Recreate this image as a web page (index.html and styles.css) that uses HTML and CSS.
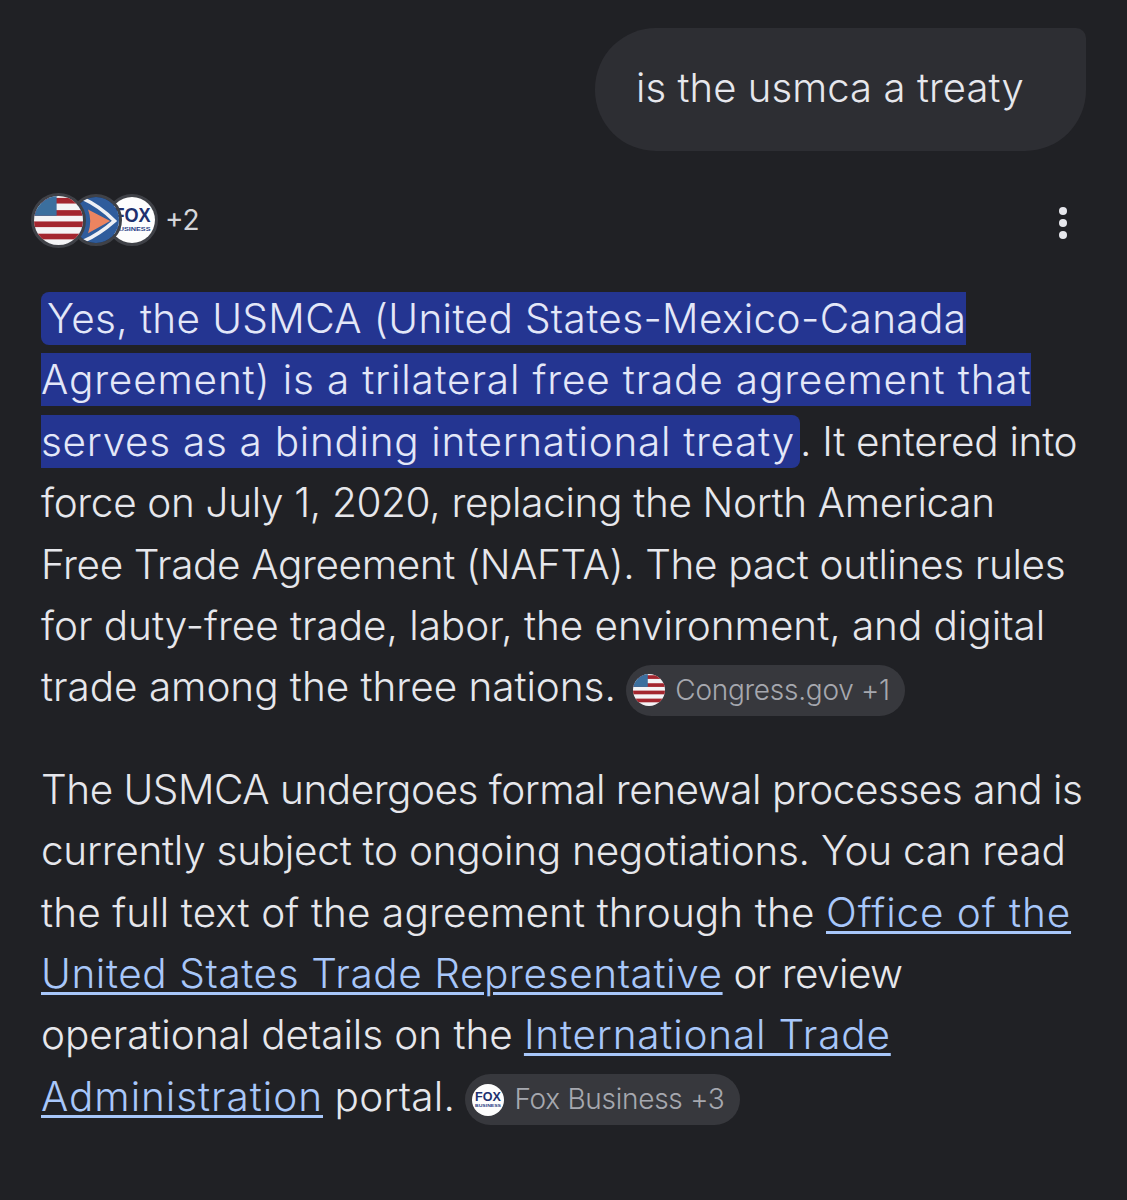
FILE: index.html
```html
<!DOCTYPE html>
<html lang="en">
<head>
    <meta charset="UTF-8">
    <meta name="viewport" content="width=device-width, initial-scale=1.0">
    <title>is the usmca a treaty</title>
    <link rel="stylesheet" href="styles.css">
</head>
<body>
    <svg class="defs" width="0" height="0">
        <symbol id="flag" viewBox="0 0 52 52">
            <rect width="52" height="52" fill="#f4f4f6"/>
            <rect y="2" width="52" height="6" fill="#a3262f"/>
            <rect y="15" width="52" height="6" fill="#a3262f"/>
            <rect y="27" width="52" height="6" fill="#a3262f"/>
            <rect y="40" width="52" height="6" fill="#a3262f"/>
            <rect width="24" height="21" fill="#3b6f9e"/>
        </symbol>
    </svg>

    <div class="page">
        <div class="question">is the usmca a treaty</div>

        <div class="sources">
            <svg class="avatar first" viewBox="0 0 52 52"><use href="#flag"/></svg>
            <svg class="avatar second" viewBox="0 0 52 52">
                <rect width="52" height="52" fill="#2f5c9c"/>
                <path d="M12 2 Q30 10 47 27 Q30 42 12 50" fill="none" stroke="#eef0f5" stroke-width="4"/>
                <path d="M17 14 L42 27 L17 41 Q22 27 17 14Z" fill="#ec8460"/>
            </svg>
            <svg class="avatar third" viewBox="0 0 52 52">
                <rect width="52" height="52" fill="#fdfdfd"/>
                <text x="26" y="28" text-anchor="middle" textLength="42" lengthAdjust="spacingAndGlyphs" class="fox-word">FOX</text>
                <text x="26" y="38" text-anchor="middle" textLength="42" lengthAdjust="spacingAndGlyphs" class="fox-sub">BUSINESS</text>
            </svg>
            <span class="more">+2</span>
            <div class="menu"><i></i><i></i><i></i></div>
        </div>

        <p class="answer">
            <span class="hl"><span class="ls-p37">Yes, the USMCA (United States-Mexico-Canada</span><br><span class="ls-p83">Agreement) is a trilateral free trade agreement that</span><br><span class="ls-p70">serves as a binding international treaty</span></span><span class="ls-n29">. It entered into</span><br>
            <span class="ls-n34">force on July 1, 2020, replacing the North American</span><br>
            <span class="ls-n36">Free Trade Agreement (NAFTA). The pact outlines rules</span><br>
            <span class="ls-n04">for duty-free trade, labor, the environment, and digital</span><br>
            <span class="ls-n04">trade among the three nations.</span>
            <span class="chip"><svg class="chip-icon" viewBox="0 0 52 52"><use href="#flag"/></svg>Congress.gov +1</span>
        </p>

        <p class="answer">
            <span class="ls-n48">The USMCA undergoes formal renewal processes and is</span><br>
            <span class="ls-n27">currently subject to ongoing negotiations. You can read</span><br>
            <span class="ls-p10">the full text of the agreement through the </span><a href="#" class="ls-p91">Office of the</a><br>
            <a href="#" class="ls-p60">United States Trade Representative</a><span class="ls-n57"> or review</span><br>
            <span class="ls-n07">operational details on the </span><a href="#" class="ls-p82">International Trade</a><br>
            <a href="#" class="ls-p95">Administration</a><span class="ls-p20"> portal.</span>
            <span class="chip"><svg class="chip-icon" viewBox="0 0 52 52">
                <rect width="52" height="52" fill="#fdfdfd"/>
                <text x="26" y="28" text-anchor="middle" textLength="42" lengthAdjust="spacingAndGlyphs" class="fox-word">FOX</text>
                <text x="26" y="38" text-anchor="middle" textLength="42" lengthAdjust="spacingAndGlyphs" class="fox-sub">BUSINESS</text>
            </svg>Fox Business +3</span>
        </p>
    </div>
</body>
</html>
```

FILE: styles.css
```css
html, body{
    margin: 0;
    background-color: #202125;
}
.defs{
    position: absolute;
}
.page{
    width: 1127px;
    height: 1200px;
    box-sizing: border-box;
    padding: 28px 41px 0 41px;
    color: #e6e7ec;
    font-family: Inter, Roboto, sans-serif;
    overflow: hidden;
}
.question{
    width: 491px;
    height: 123px;
    box-sizing: border-box;
    margin-left: 554px;
    padding-left: 41px;
    background-color: #2d2e33;
    border-radius: 61px 10px 61px 61px;
    font-size: 40px;
    font-weight: 350;
    letter-spacing: 0.1px;
    line-height: 119px;
}
.sources{
    display: flex;
    align-items: center;
    height: 56px;
    margin-top: 41px;
    margin-bottom: -1px;
    margin-left: -10px;
}
.avatar{
    width: 46px;
    height: 46px;
    border: 3px solid #3f4147;
    border-radius: 50%;
    flex-shrink: 0;
}
.first{
    width: 49px;
    height: 49px;
    z-index: 3;
}
.second{
    z-index: 2;
    margin-left: -16px;
}
.third{
    z-index: 1;
    margin-left: -16px;
}
.more{
    margin-left: 7px;
    font-size: 28px;
    color: #d5d6da;
}
.menu{
    display: flex;
    flex-direction: column;
    gap: 4px;
    margin-left: auto;
    margin-right: 19px;
    padding-top: 5px;
}
.menu i{
    width: 8px;
    height: 8px;
    border-radius: 50%;
    background-color: #e6e7ec;
}
.answer{
    margin: 41px 0 0 0;
    font-size: 40.5px;
    font-weight: 350;
    line-height: 61.4px;
    white-space: nowrap;
}
.hl{
    background-color: #243591;
    color: #e3e7f8;
    padding: 2px 5px 2px 6px;
    border-radius: 8px;
}
a{
    color: #a8c7fa;
    text-decoration: underline;
    text-underline-offset: 4px;
    text-decoration-thickness: 3px;
}
.chip{
    display: inline-flex;
    align-items: center;
    height: 51px;
    box-sizing: border-box;
    padding: 0 15px 0 7px;
    gap: 10px;
    margin-left: -1px;
    background-color: #37383d;
    border-radius: 26px;
    color: #a6a8af;
    font-size: 28px;
    letter-spacing: -0.27px;
    line-height: 51px;
    vertical-align: -5px;
}
.chip-icon{
    width: 32px;
    height: 32px;
    border-radius: 50%;
}
.fox-word{
    font-family: "Liberation Sans", sans-serif;
    font-weight: 700;
    font-size: 22px;
    letter-spacing: 0;
    fill: #20306f;
}
.fox-sub{
    font-family: "Liberation Sans", sans-serif;
    font-weight: 700;
    font-size: 6px;
    letter-spacing: 0;
    fill: #2a3f86;
}
/* line widths differ from the original typeface, so each run gets its own tracking */
.ls-n57{ letter-spacing: -0.57px; }
.ls-n48{ letter-spacing: -0.48px; }
.ls-n36{ letter-spacing: -0.36px; }
.ls-n34{ letter-spacing: -0.34px; }
.ls-n29{ letter-spacing: -0.29px; }
.ls-n27{ letter-spacing: -0.27px; }
.ls-n07{ letter-spacing: -0.07px; }
.ls-n04{ letter-spacing: -0.04px; }
.ls-p10{ letter-spacing: 0.10px; }
.ls-p20{ letter-spacing: 0.20px; }
.ls-p37{ letter-spacing: 0.37px; }
.ls-p60{ letter-spacing: 0.60px; }
.ls-p70{ letter-spacing: 0.70px; }
.ls-p82{ letter-spacing: 0.82px; }
.ls-p83{ letter-spacing: 0.83px; }
.ls-p91{ letter-spacing: 0.91px; }
.ls-p95{ letter-spacing: 0.95px; }
```
